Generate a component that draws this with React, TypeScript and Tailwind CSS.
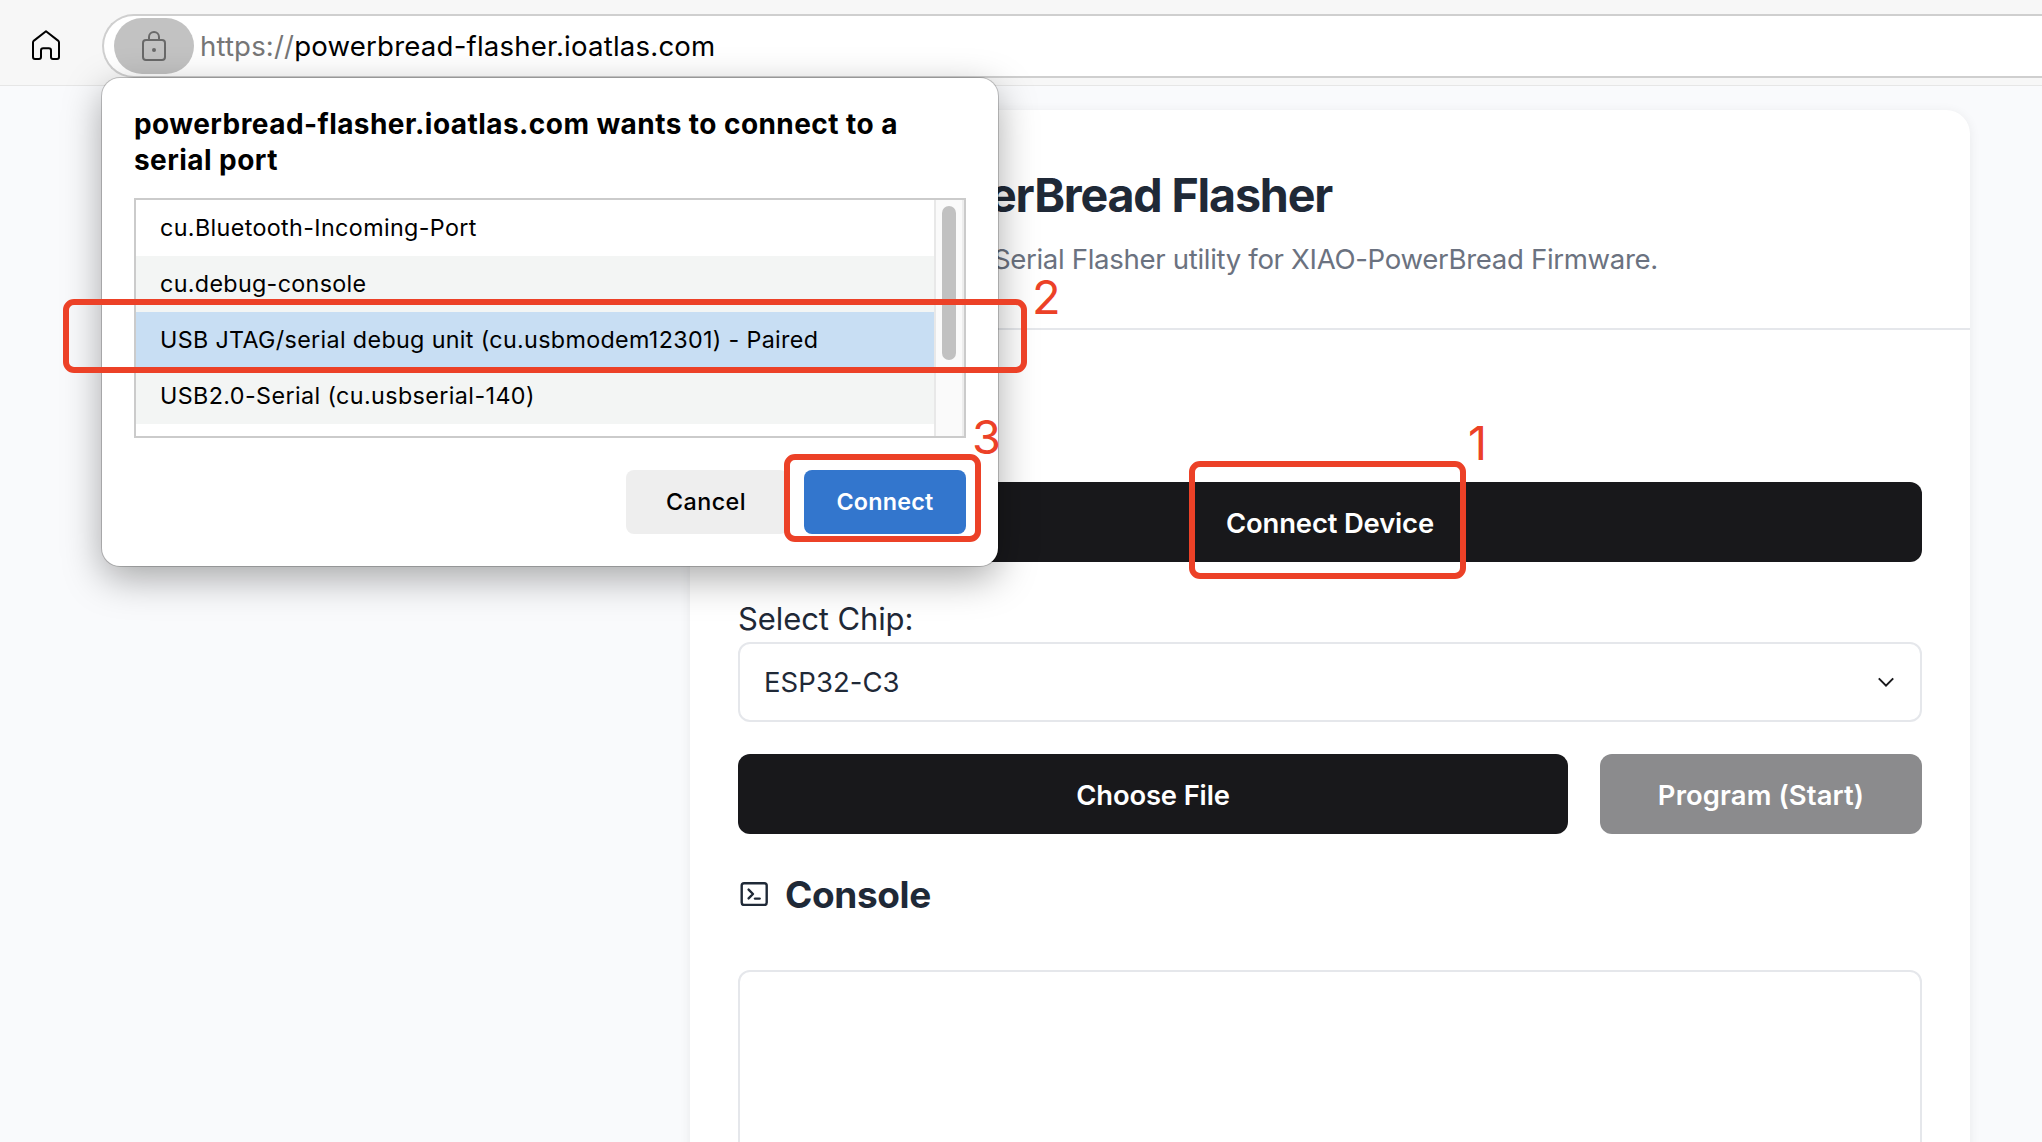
import React from "react";

function HomeIcon() {
  return (
    <svg width="28" height="30" viewBox="0 0 28 30" fill="none" stroke="#000" strokeWidth="2" strokeLinejoin="round">
      <path d="M14 1.3 L26 10.6 Q27 11.5 27 12.6 V27 Q27 29 25 29 H21 Q19 29 19 27 V20.4 Q19 18.2 16.8 18.2 H11.2 Q9 18.2 9 20.4 V27 Q9 29 7 29 H3 Q1 29 1 27 V12.6 Q1 11.5 2 10.6 Z" />
    </svg>
  );
}

function LockIcon() {
  return (
    <svg width="24" height="30" viewBox="0 0 24 30" fill="none" stroke="#696969" strokeWidth="2">
      <path d="M7 9 V6 A5 5 0 0 1 17 6 V9" />
      <rect x="1" y="9" width="22" height="20" rx="3" />
      <circle cx="12" cy="19" r="2" fill="#696969" stroke="none" />
    </svg>
  );
}

function TerminalIcon() {
  return (
    <svg width="28" height="24" viewBox="0 0 28 24" fill="none" stroke="#1f2937" strokeWidth="2.4">
      <rect x="1.7" y="1.2" width="25" height="21.8" rx="2.4" />
      <path d="M8.6 7.6 L13 12 L8.6 16.4" strokeLinejoin="round" strokeLinecap="round" />
      <path d="M15 16.6 H19.6" strokeLinecap="round" />
    </svg>
  );
}

function Chevron() {
  return (
    <svg width="16" height="10" viewBox="0 0 16 10" fill="none" stroke="#18181b" strokeWidth="2">
      <path d="M0.8 1.4 L8 8.6 L15.2 1.4" />
    </svg>
  );
}

const ports = [
  { name: "cu.Bluetooth-Incoming-Port", row: "bg-white tracking-[0.374px]" },
  { name: "cu.debug-console", row: "bg-[#f3f5f4] tracking-[0.33px]" },
  { name: "USB JTAG/serial debug unit (cu.usbmodem12301) - Paired", row: "bg-[#c8def3] tracking-[0.34px]" },
  { name: "USB2.0-Serial (cu.usbserial-140)", row: "bg-[#f3f5f4] tracking-[0.4px]" },
];

function SerialDialog() {
  return (
    <section className="absolute left-[102px] top-[78px] flex h-[488px] w-[896px] flex-col rounded-[18px] bg-white px-8 pt-7 text-black shadow-[0_0_0_1px_rgba(0,0,0,0.2),0_12px_38px_rgba(0,0,0,0.34)]">
      <h2 className="text-[28px] font-bold leading-9 tracking-[0.44px]">
        powerbread-flasher.ioatlas.com wants to connect to a
        <br />
        serial port
      </h2>
      <div className="mt-5 flex h-[240px] shrink-0 overflow-hidden border-2 border-[#cbcbcb]">
        <ul className="flex-1">
          {ports.map((p) => (
            <li key={p.name} className={`flex h-14 items-center whitespace-pre pl-6 text-[23.3px] ${p.row}`}>
              {p.name}
            </li>
          ))}
        </ul>
        <div className="flex w-[30px] justify-center border-x-2 border-r-[#ededed] border-l-[#e8e8e8] bg-[#fafafa] pt-1.5">
          <div className="h-[154px] w-3.5 rounded-full bg-[#c1c1c1]" />
        </div>
      </div>
      <div className="mt-8 flex justify-end gap-4 text-[23.3px] font-semibold">
        <button className="h-16 w-[162px] rounded-lg bg-[#eeeeee] pr-0.5 font-medium tracking-[0.468px]">Cancel</button>
        <button className="h-16 w-[162px] rounded-lg bg-[#3376cd] tracking-[0.25px] text-white">Connect</button>
      </div>
    </section>
  );
}

function Annotations() {
  return (
    <div className="text-[47px] leading-[56px] text-[#ec4127]">
      <div className="absolute left-[63px] top-[299px] h-[74px] w-[964px] rounded-[11px] border-[6px] border-[#ec4127]" />
      <span className="absolute left-[1032px] top-[269px]">2</span>
      <div className="absolute left-[784px] top-[454px] h-[88px] w-[197px] rounded-[11px] border-[6px] border-[#ec4127]" />
      <span className="absolute left-[972px] top-[409px]">3</span>
      <div className="absolute left-[1189px] top-[461px] h-[118px] w-[277px] rounded-[11px] border-[6px] border-[#ec4127]" />
      <span className="absolute left-[1468px] top-[415px]">1</span>
    </div>
  );
}

export default function App() {
  return (
    <div className="relative flex h-[1142px] w-[2042px] flex-col overflow-hidden bg-[#f9fafc] font-['Inter',sans-serif] text-[#1f2937]">
      <header className="flex h-[86px] shrink-0 items-start border-b border-[#e6e6e6] bg-[#f7f7f7] pl-8 pt-3.5">
        <div className="mr-[42px] mt-4">
          <HomeIcon />
        </div>
        <div className="flex h-16 flex-1 items-center rounded-l-full border-2 border-r-0 border-[#cfcfcf] bg-white pl-2.5 text-[27.6px]">
          <div className="mr-1.5 flex h-14 w-20 items-center justify-center rounded-full bg-[#c2c2c2]">
            <LockIcon />
          </div>
          <span className="pt-0.5 tracking-[0.14px] text-[#767676]">https://</span>
          <span className="pt-0.5 tracking-[0.2px] text-black">powerbread-flasher.ioatlas.com</span>
        </div>
      </header>

      <main className="ml-[690px] mt-6 h-[1100px] w-[1280px] shrink-0 rounded-[24px] bg-white shadow-[0_2px_12px_rgba(0,0,0,0.07)]">
        <div className="h-[220px] border-b-2 border-[#e5e7eb] px-12 pt-12">
          <h1 className="w-[594px] whitespace-nowrap text-right text-[46.6px] font-bold leading-[74px] tracking-[-1.18px]">
            PowerBread Flasher
          </h1>
          <p className="mt-[7px] w-[920px] whitespace-nowrap text-right text-[27.6px] leading-10 tracking-[-0.33px] text-[#6b7280]">
            Serial Flasher utility for XIAO-PowerBread Firmware.
          </p>
        </div>
        <div className="flex flex-col px-12 pt-[152px]">
          <button className="h-20 rounded-xl bg-[#18181b] pt-[3px] text-[27.4px] font-semibold tracking-[-0.15px] text-white">
            Connect Device
          </button>
          <label className="mt-8 h-12 text-[31px] leading-[50px] tracking-[-0.098px]">Select Chip:</label>
          <div className="flex h-20 items-center justify-between rounded-xl border-2 border-[#e5e7eb] pl-6 pr-[26px] text-[27.5px] tracking-[0.05px]">
            <span className="pt-0.5">ESP32-C3</span>
            <Chevron />
          </div>
          <div className="mt-8 flex h-20 gap-8 text-[27.4px] font-semibold text-white">
            <button className="flex-1 rounded-xl bg-[#18181b] pt-[3px] tracking-[-0.15px]">Choose File</button>
            <button className="w-[322px] rounded-xl bg-[#8b8b8d] pt-[3px] tracking-[0.12px]">Program (Start)</button>
          </div>
          <div className="mt-9 flex h-12 items-center gap-5 pl-0.5">
            <TerminalIcon />
            <h2 className="-ml-[3px] pt-0.5 text-[37px] font-bold leading-[48px] tracking-[-0.4px]">Console</h2>
          </div>
          <div className="mt-[52px] h-[400px] rounded-xl border-2 border-[#e5e7eb]" />
        </div>
      </main>

      <SerialDialog />
      <Annotations />
    </div>
  );
}
